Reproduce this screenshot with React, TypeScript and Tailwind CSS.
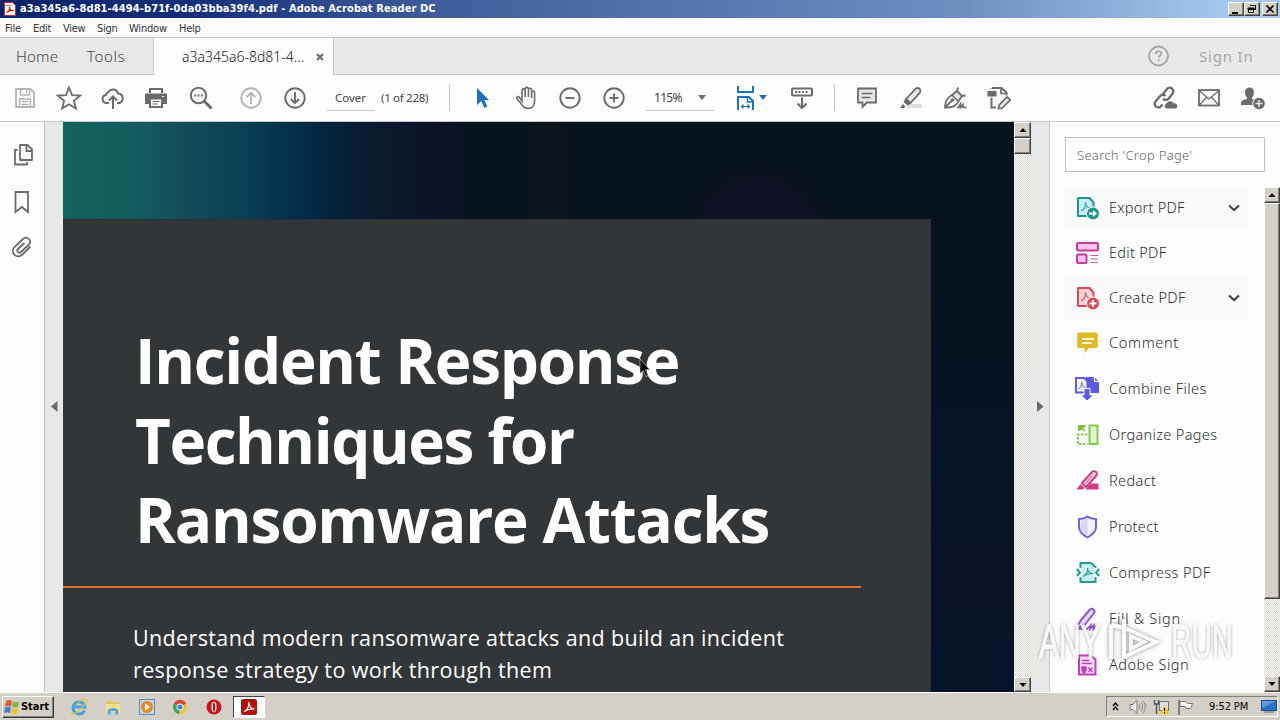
import React, { ReactNode } from "react";

const G = "#6b6b6b";

function Svg({ w, h, vb, children, className = "" }: { w: number; h: number; vb?: string; children: ReactNode; className?: string }) {
  return (
    <svg width={w} height={h} viewBox={vb ?? `0 0 ${w} ${h}`} fill="none" className={`block shrink-0 ${className}`}>
      {children}
    </svg>
  );
}

function Tool({ children }: { children: ReactNode }) {
  return <div className="flex h-full w-11 shrink-0 items-center justify-center">{children}</div>;
}

function WinButton({ children, className = "" }: { children?: ReactNode; className?: string }) {
  return (
    <div className={`flex items-center justify-center border border-t-white border-l-white border-r-[#404040] border-b-[#404040] bg-[#d4d0c8] shadow-[inset_-1px_-1px_0_#808080] ${className}`}>
      {children}
    </div>
  );
}

function Arrow({ down = false }: { down?: boolean }) {
  return (
    <Svg w={8} h={4}>
      <path d={down ? "M0.5 0h7L4 4z" : "M0.5 4h7L4 0z"} fill="#000" />
    </Svg>
  );
}

const track = "bg-[repeating-conic-gradient(#ffffff_0_25%,#d8d4cc_0_50%)] bg-[length:2px_2px]";

const PdfMark = ({ c }: { c: string }) => (
  <path d="M5 15c3-1.500 5-4.500 4.500-8.500.5 4 2.500 6 5.500 5.500" stroke={c} strokeWidth="1.200" strokeLinejoin="round" />
);

const icons: Record<string, ReactNode> = {
  export: (
    <Svg w={24} h={24}>
      <path d="M2 2h11.500l4 4.500V20H2z" fill="#c5eef0" stroke="#219492" strokeWidth="2" strokeLinejoin="round" />
      <PdfMark c="#3aa3b3" />
      <circle cx="17" cy="17.500" r="6.900" fill="#fdfdfd" />
      <circle cx="17" cy="17.500" r="6" fill="#1e9690" />
      <path d="M13 17.500h5" stroke="#fff" strokeWidth="2.200" />
      <path d="M17 14l4 3.500-4 3.500z" fill="#fff" />
    </Svg>
  ),
  edit: (
    <Svg w={24} h={24}>
      <rect x="1" y="2" width="21" height="7.500" rx="1" fill="#fcc4ee" stroke="#c83a93" strokeWidth="2" />
      <rect x="1" y="13.500" width="9.500" height="8.500" rx="1" fill="#fcc4ee" stroke="#c83a93" strokeWidth="2" />
      <path d="M14.500 14.500H22M14.500 18H22M14.500 21.500H22" stroke="#c0609c" strokeWidth="1.200" />
    </Svg>
  ),
  create: (
    <Svg w={24} h={24}>
      <path d="M2 2h11.500l4 4.500V20H2z" fill="#fbd4d8" stroke="#d9475a" strokeWidth="2" strokeLinejoin="round" />
      <PdfMark c="#b66270" />
      <circle cx="17" cy="17.500" r="6.900" fill="#fdfdfd" />
      <circle cx="17" cy="17.500" r="6" fill="#d9475a" />
      <path d="M13.500 17.500h7M17 14v7" stroke="#fff" strokeWidth="2" />
    </Svg>
  ),
  comment: (
    <Svg w={24} h={24}>
      <path d="M3 1.500h17a1.800 1.800 0 0 1 1.800 1.800v12a1.800 1.800 0 0 1-1.800 1.800H13L8.500 22v-4.900H3a1.800 1.800 0 0 1-1.800-1.800v-12a1.800 1.800 0 0 1 1.800-1.800z" fill="#e0ba26" />
      <path d="M6 8h12M6 12h9.500" stroke="#fff8d8" strokeWidth="1.900" />
    </Svg>
  ),
  combine: (
    <Svg w={24} h={24} className="-ml-[1px] mr-[1px]">
      <path d="M11 0h8.500l4.500 5v11H11z" fill="#5f5be0" />
      <path d="M19.500 0v4.500H24" stroke="#fdfdfd" strokeWidth="1.200" />
      <path d="M1 1h8.500l3 3.500V15.500H1z" fill="#f4f3ff" stroke="#5f5be0" strokeWidth="2" />
      <path d="M3.500 12c2-1 3.500-3.500 3.200-6.500C7 9 8.500 10.500 10.500 10" stroke="#5f5be0" strokeWidth="1" />
      <path d="M9 11.500h6V18h3.800L12 24 5.500 18H9z" fill="#5f5be0" stroke="#fdfdfd" strokeWidth="1" />
    </Svg>
  ),
  organize: (
    <Svg w={24} h={24}>
      <rect x="13.500" y="2.500" width="8" height="18.500" fill="#dff5cf" stroke="#88c94c" strokeWidth="2" />
      <path d="M2 8.500V2h1.500l5.500 0L2 8.500" fill="#7fc241" />
      <path d="M3 7.500L9.500 2.500M3 3l6 5" stroke="#7fc241" strokeWidth="1.600" />
      <path d="M11.500 11.500H2v9.500h9.500" stroke="#88c94c" strokeWidth="2" strokeDasharray="2.500 1.500" />
    </Svg>
  ),
  redact: (
    <Svg w={24} h={24}>
      <path d="M9.500 20.500l5-6h7q1 0 1 1v5z" fill="#d93a85" />
      <path d="M.5 20.500l4-5.500 4 4-2 1.500z" fill="#d93a85" />
      <path d="M6 14L16 3a2.800 2.800 0 0 1 4 4L10 18z" fill="#fbd0e6" stroke="#c93d84" strokeWidth="2" />
      <path d="M9.500 14.500l6.500-7.500" stroke="#c93d84" strokeWidth="1" />
    </Svg>
  ),
  protect: (
    <Svg w={24} h={24}>
      <path d="M11.500 1.500C9 3.500 6 4 3 4v8c0 5 4 8 8.500 10.500C16 20 20 17 20 12V4c-3 0-6-.5-8.500-2.500z" fill="#f1f0fd" stroke="#7468d0" strokeWidth="2" />
      <path d="M11.500 4C9.500 5 7 5.500 5 5.500V12c0 3.500 3 6.500 6.500 8z" fill="#d9d6f8" />
    </Svg>
  ),
  compress: (
    <Svg w={24} h={24}>
      <path d="M4.500 7V2h10.500l4.500 4v1M4.500 16v5h15v-5" fill="#c9eeee" stroke="#299795" strokeWidth="2" />
      <path d="M5.500 6h13v11h-13z" fill="#c9eeee" />
      <path d="M7 15.500c3-1.500 5-5 4.500-8.500.5 4 2.500 6 5.500 5.500-3.500-.3-7 .8-10 3z" stroke="#299795" strokeWidth="1.100" />
      <path d="M0.800 8l3.200 3.500L.8 15M23.200 8L20 11.500l3.200 3.500" stroke="#299795" strokeWidth="2" />
    </Svg>
  ),
  fill: (
    <Svg w={24} h={24} className="-ml-[1px] mr-[1px]">
      <path d="M1 22l5-9L15 2.500a2.700 2.700 0 0 1 4 3.500L10 17.500z" fill="#e8dafb" stroke="#8a5acb" strokeWidth="2" strokeLinejoin="round" />
      <path d="M1 22h11l4-4-1 4 4-4-.5 4 3.500-3v3" stroke="#8a4fc4" strokeWidth="1.700" />
    </Svg>
  ),
  adobesign: (
    <Svg w={24} h={24}>
      <path d="M3 2.500h11.500l5 4v15H3z" fill="#fbdcf8" stroke="#bd3fc0" strokeWidth="2" />
      <path d="M6 7.500h7M6 10.500h10" stroke="#bd3fc0" strokeWidth="1.300" />
      <path d="M6 14h4v3.500h-1V20H7v-2.500H6zM12.500 14.500l4 4.500M16.500 14.500l-4 4.500" fill="#bd3fc0" stroke="#bd3fc0" strokeWidth="1.300" />
    </Svg>
  ),
};

const tools = [
  { label: "Export PDF", icon: "export", box: "h-[45px]", open: true, ls: "tracking-[0.25px]" },
  { label: "Edit PDF", icon: "edit", box: "h-[45px]", ls: "tracking-[0.3px]" },
  { label: "Create PDF", icon: "create", box: "h-[45px]", open: true, ls: "tracking-[0.35px]" },
  { label: "Comment", icon: "comment", box: "h-[46px]", ls: "tracking-[0.7px]" },
  { label: "Combine Files", icon: "combine", box: "h-[46px]", ls: "tracking-[0.45px]" },
  { label: "Organize Pages", icon: "organize", box: "h-[46px]", ls: "tracking-[0.35px]" },
  { label: "Redact", icon: "redact", box: "h-[46px]", ls: "tracking-[0.4px]" },
  { label: "Protect", icon: "protect", box: "h-[46px]", ls: "tracking-[0.35px]" },
  { label: "Compress PDF", icon: "compress", box: "h-[46px]", ls: "tracking-[0.45px]" },
  { label: "Fill & Sign", icon: "fill", box: "h-[46px]", ls: "tracking-[0.7px]" },
  { label: "Adobe Sign", icon: "adobesign", box: "h-[46px]", ls: "tracking-[0.5px]" },
];

function TitleBar() {
  return (
    <div className="flex h-[18px] shrink-0 items-center bg-[linear-gradient(90deg,#0a246a_0%,#15307a_15%,#3f5f9c_35%,#6c8fc0_75%,#a6caf0_97%)] pr-[2px] pl-1">
      <Svg w={12} h={14}>
        <path d="M0.500.500h8l3 3v10h-11z" fill="#fff" stroke="#c9302a" />
        <path d="M1 3h7v1H1z" fill="#e87b70" />
        <path d="M2.500 10.500c2-1 3.500-3 3-5.500 0 2.500 2 4.200 4 3.500-2-.2-5 .5-7 2z" stroke="#d3211b" strokeWidth="1.300" />
      </Svg>
      <div className="ml-1 flex-1 text-[11px] leading-[18px] font-bold tracking-[0.1px] whitespace-nowrap text-white [font-family:'DejaVu_Sans_Condensed','DejaVu_Sans',sans-serif]">
        a3a345a6-8d81-4494-b71f-0da03bba39f4.pdf - Adobe Acrobat Reader DC
      </div>
      <WinButton className="h-[14px] w-4">
        <Svg w={10} h={10}><path d="M1 8h6v2H1z" fill="#000" /></Svg>
      </WinButton>
      <WinButton className="h-[14px] w-4">
        <Svg w={10} h={10}><path d="M3.500 1.500h5v4h-2M3 1.500h6M1.500 4.500h5v4h-5zM1 4h6v1.500H1z" stroke="#000" /></Svg>
      </WinButton>
      <WinButton className="ml-[2px] h-[14px] w-4">
        <Svg w={10} h={10}><path d="M1.500 1.500l7 7M8.500 1.500l-7 7" stroke="#000" strokeWidth="1.600" /></Svg>
      </WinButton>
    </div>
  );
}

function MenuBar() {
  return (
    <div className="flex h-[19px] shrink-0 items-center bg-[#fdfbfa] pt-[2px] pl-[5px] text-[11px] leading-[17px] text-[#333] [font-family:'DejaVu_Sans_Condensed','DejaVu_Sans',sans-serif]">
      <span className="w-7 tracking-[-0.1px]">File</span>
      <span className="w-[30px] tracking-[-0.3px]">Edit</span>
      <span className="w-[34px] tracking-[-0.3px]">View</span>
      <span className="w-8 tracking-[-0.3px]">Sign</span>
      <span className="w-[50px] tracking-[-0.2px]">Window</span>
      <span className="tracking-[-0.3px]">Help</span>
    </div>
  );
}

function TabBar() {
  return (
    <div className="flex h-[38px] shrink-0 border-t border-[#c6c6c6] text-[#444] [font-family:'Noto_Sans',sans-serif]">
      <div className="flex w-[154px] items-center border-r border-b border-[#c6c6c6] bg-[#e9e9e9] pl-4 text-[15px] font-light">
        <span className="w-[71px] tracking-[0.2px]">Home</span>
        <span className="tracking-[0.6px]">Tools</span>
      </div>
      <div className="flex w-[179px] items-center bg-[#fdfdfd] pl-7">
        <span className="w-[134px] text-[14px] font-light text-[#222]">a3a345a6-8d81-4...</span>
        <Svg w={8} h={8}><path d="M1 1l6 6M7 1L1 7" stroke="#666" strokeWidth="2" /></Svg>
      </div>
      <div className="flex flex-1 items-center border-b border-l border-[#c6c6c6] bg-[#e9e9e9]">
        <Svg w={22} h={22} className="ml-[813px]">
          <circle cx="11.500" cy="11" r="9.500" stroke="#a5a5a5" strokeWidth="1.800" />
          <path d="M8.700 9c0-3.700 5.600-3.500 5.600-.3 0 2-2.600 2.100-2.600 4M11.700 14.200v2" stroke="#a5a5a5" strokeWidth="1.700" />
        </Svg>
        <span className="ml-[30px] text-[15px] tracking-[0.8px] text-[#a8a8a8]">Sign In</span>
      </div>
    </div>
  );
}

function Toolbar() {
  return (
    <div className="flex h-[47px] shrink-0 items-center border-b border-[#c8c8c8] bg-[#fdfdfd] pb-px pl-[3px] text-[#444] [font-family:'Noto_Sans',sans-serif]">
      <Tool>
        <Svg w={22} h={22}>
          <path d="M2 2h14.500L20 5.500V20H2z" stroke="#b4b4b4" strokeWidth="1.800" />
          <path d="M6.500 2v6h9V2M5.500 20v-8h11v8M12.500 3.500v3M7.500 14.500h7M7.500 17.500h7" stroke="#b4b4b4" strokeWidth="1.500" />
        </Svg>
      </Tool>
      <Tool>
        <Svg w={26} h={26}>
          <path d="M13 2.500l3 7.600 8.200.5-6.300 5.200 2 7.700L13 19.200l-6.900 4.300 2-7.700L1.800 10.600l8.200-.5z" stroke={G} strokeWidth="1.800" />
        </Svg>
      </Tool>
      <Tool>
        <Svg w={24} h={24}>
          <path d="M8 17H5.500a4 4 0 0 1-.8-7.900A4 4 0 0 1 7.500 6 5.200 5.200 0 0 1 17 7.500a4.900 4.900 0 0 1 1.500 9.500H16" stroke={G} strokeWidth="2" />
          <path d="M12 23V11M8 14.500l4-4 4 4" stroke={G} strokeWidth="2" />
        </Svg>
      </Tool>
      <Tool>
        <Svg w={24} h={24} className="-translate-x-px">
          <path d="M5 2h14v5H5z" fill={G} />
          <path d="M7 4h10v3H7z" fill="#fdfdfd" />
          <path d="M2 7.500h20q1 0 1 1V18h-4v4H5v-4H1V8.500q0-1 1-1z" fill={G} />
          <path d="M7 13.500h10V20H7z" fill="#fdfdfd" />
          <path d="M8.500 15.500h7M8.500 18h5" stroke={G} strokeWidth="1.200" />
          <path d="M18 10.500h2" stroke="#fff" strokeWidth="1.200" />
        </Svg>
      </Tool>
      <Tool>
        <Svg w={24} h={24}>
          <circle cx="9.500" cy="9.500" r="7.700" stroke={G} strokeWidth="2" />
          <path d="M15 15l7.500 7.500" stroke={G} strokeWidth="3" />
          <path d="M5.300 9.500h8.500" stroke={G} strokeWidth="1.900" strokeDasharray="1.900 1.400" />
        </Svg>
      </Tool>
      <div className="w-[6px] shrink-0" />
      <Tool>
        <Svg w={22} h={22}>
          <circle cx="11" cy="11" r="9.700" stroke="#b4b4b4" strokeWidth="1.900" />
          <path d="M11 17V6M6.800 10L11 5.800l4.200 4.200" stroke="#b4b4b4" strokeWidth="1.900" />
        </Svg>
      </Tool>
      <Tool>
        <Svg w={22} h={22}>
          <circle cx="11" cy="11" r="9.700" stroke={G} strokeWidth="1.900" />
          <path d="M11 5v11M6.800 12l4.200 4.200 4.200-4.200" stroke={G} strokeWidth="1.900" />
        </Svg>
      </Tool>
      <div className="ml-[10px] h-[27px] w-12 shrink-0 border-b border-[#c4c4c4] pl-2 text-[11.500px] leading-[27px]">Cover</div>
      <span className="ml-[6px] w-[68px] shrink-0 text-[11.500px] tracking-[-0.300px] whitespace-nowrap">(1 of 228)</span>
      <div className="mr-[10px] h-[27px] w-px shrink-0 bg-[#c4c4c4]" />
      <Tool>
        <Svg w={14} h={22} className="translate-x-[1px]">
          <path d="M1 1v17l4.300-4 3 7 3-1.400-3-6.600H13z" fill="#1f6fc0" />
        </Svg>
      </Tool>
      <Tool>
        <Svg w={24} h={24}>
          <path d="M7.500 13V4.500a1.600 1.600 0 0 1 3.200 0V11 3a1.600 1.600 0 0 1 3.200 0v8V3.800a1.600 1.600 0 0 1 3.200 0V12 6.500a1.500 1.500 0 0 1 3 0V15c0 4.500-2.500 7.500-6.600 7.500-4.500 0-6-3-7.500-5.800L2.300 12.500c-.8-1.500 1.500-2.600 2.700-1L7.500 15z" stroke={G} strokeWidth="1.600" className="[transform:translateX(0.500px)]" />
        </Svg>
      </Tool>
      <Tool>
        <Svg w={22} h={22}>
          <circle cx="11" cy="11" r="9.700" stroke={G} strokeWidth="1.900" />
          <path d="M6.500 11h9" stroke={G} strokeWidth="1.900" />
        </Svg>
      </Tool>
      <Tool>
        <Svg w={22} h={22}>
          <circle cx="11" cy="11" r="9.700" stroke={G} strokeWidth="1.900" />
          <path d="M6.500 11h9M11 6.500v9" stroke={G} strokeWidth="1.900" />
        </Svg>
      </Tool>
      <div className="ml-[10px] flex h-[27px] w-[68px] shrink-0 items-center border-b border-[#c4c4c4] pl-2">
        <span className="w-[44px] pt-px text-[12px] tracking-[-0.7px]">115%</span>
        <Svg w={8} h={5}><path d="M0 0h8L4 5z" fill={G} /></Svg>
      </div>
      <div className="ml-[10px] flex w-11 shrink-0 items-center pl-3">
        <Svg w={20} h={26}>
          <path d="M2 1v6h15V1M17 25v-9l-4-4H2v13" stroke="#1f6fc0" strokeWidth="2" />
          <path d="M11.500 12v5H17" stroke="#1f6fc0" strokeWidth="1.500" />
          <path d="M5.500 21.500h8M7.500 19.500l-2 2 2 2M11.500 19.500l2 2-2 2" stroke="#1f6fc0" strokeWidth="1.200" />
        </Svg>
        <Svg w={8} h={5} className="ml-[3px]"><path d="M0 0h8L4 5z" fill="#1f6fc0" /></Svg>
      </div>
      <div className="ml-3">
        <Tool>
          <Svg w={24} h={24}>
            <rect x="2" y="2.500" width="20" height="7" rx="1" stroke={G} strokeWidth="2" />
            <path d="M5 6h14" stroke={G} strokeWidth="2" strokeDasharray="2 1.500" />
            <path d="M12 11.500V22M7.500 17.500L12 22l4.500-4.500" stroke={G} strokeWidth="2" />
          </Svg>
        </Tool>
      </div>
      <div className="mr-[10px] ml-[10px] h-[27px] w-px shrink-0 bg-[#c4c4c4]" />
      <Tool>
        <Svg w={22} h={22}>
          <path d="M2 1.500h18v14h-9L6.500 20v-4.500H2z" fill="#e6e6e6" stroke={G} strokeWidth="1.800" />
          <path d="M5.500 6.500h11M5.500 10.500h9" stroke={G} strokeWidth="1.500" />
        </Svg>
      </Tool>
      <Tool>
        <Svg w={24} h={24}>
          <path d="M8 18h15v4H8z" fill="#dedede" />
          <path d="M7 13L17 2.500q1.500-1 3.500 0 1.500 1.500.5 4L11.500 17z" fill="#e6e6e6" stroke={G} strokeWidth="1.800" />
          <path d="M6.500 12.500l5.500 5-3.500 2-4-3.500zM4 18l2.500 2.500L5 22H1z" fill={G} />
        </Svg>
      </Tool>
      <Tool>
        <Svg w={24} h={24}>
          <path d="M2 21.500C2 15 4 11.500 9 9l6.500 6C14 19 9.500 22 2 21.500zM2 21.500l7-7" stroke={G} strokeWidth="1.800" />
          <path d="M9.500 8.500L14 2.500l1 5 6 1.500-5 6z" fill="#e6e6e6" />
          <path d="M15 1.500l-1 3.500 5 5 3.500-.5M9 9l5-4M15.500 15l3.500-5" stroke={G} strokeWidth="1.800" />
          <circle cx="9.500" cy="14" r="1.800" fill={G} />
          <path d="M14 21.500h1.500l2-3.500v3.500l2.500-3v3H23.500" stroke={G} strokeWidth="1.700" />
        </Svg>
      </Tool>
      <Tool>
        <Svg w={24} h={24}>
          <path d="M5 2h9.500l5 4.500v3M4.500 11.500V21.500H9" stroke={G} strokeWidth="2" />
          <path d="M14 2v5.500h5" stroke={G} strokeWidth="1.700" />
          <path d="M0.500 5h9v5.500h-9zM2.500 4q0-2 3-2" fill={G} />
          <path d="M11.500 22.500l.7-3.700L20 11l3.200 3-8 8z" fill="#e6e6e6" stroke={G} strokeWidth="1.700" />
        </Svg>
      </Tool>
      <div className="w-[122px] shrink-0" />
      <Tool>
        <Svg w={26} h={24}>
          <path d="M10.500 8.500l4.500-5.500a3.600 3.600 0 0 1 5.500 4.700l-4 5a3.800 3.800 0 0 1-5.500 0" stroke={G} strokeWidth="2.300" />
          <path d="M13.500 10a3.800 3.800 0 0 0-5.500.3l-4.500 5.200a3.600 3.600 0 0 0 5.500 4.700l1.500-1.700" stroke={G} strokeWidth="2.300" />
          <path d="M14 22.500a2.800 2.800 0 0 1 .5-5 4 4 0 0 1 7.300 0 2.600 2.600 0 0 1 1.700 5z" fill={G} />
        </Svg>
      </Tool>
      <Tool>
        <Svg w={22} h={18}>
          <rect x="1" y="1" width="20" height="15.500" stroke={G} strokeWidth="1.800" />
          <path d="M1.500 2L11 10l9.500-8M1.500 16l7-8M20.500 16l-7-8" stroke={G} strokeWidth="1.200" />
        </Svg>
      </Tool>
      <Tool>
        <Svg w={26} h={24}>
          <path d="M9.500 1.500c5.500 0 5.500 7 2.500 10v1.500c2 .3 3.500 1.200 3.500 1.200L13.500 19H1v-2c0-2.500 3-3.500 6-4v-1.500c-3-3-3-10 2.500-10z" fill={G} />
          <circle cx="19" cy="17.500" r="6.800" fill="#fdfdfd" />
          <circle cx="19" cy="17.500" r="5.800" fill={G} />
          <path d="M15.500 17.500h7M19 14v7" stroke="#e5e5e5" strokeWidth="1.500" />
        </Svg>
      </Tool>
    </div>
  );
}

function Document() {
  return (
    <div className="relative flex min-w-0 flex-1 flex-col overflow-hidden bg-[#07131f] bg-[linear-gradient(90deg,#13635f_0px,#135d5e_70px,#124d5b_120px,#093e54_185px,#022d49_235px,#02243f_265px,#0a1c31_300px,#0b1429_365px,#0c1228_385px,#07131f_410px,#07131f_455px,#0b1519_485px,#07131f_520px,#07131f_951px)]">
      <div className="absolute inset-y-0 right-0 w-[84px] bg-[linear-gradient(180deg,#07131f_0%,#07131f_30%,#061427_60%,#0b1226_82%,#05142b_94%)]" />
      <div className="absolute top-[38px] left-[620px] h-[60px] w-[150px] bg-[radial-gradient(ellipse_at_bottom,#0e1123_45%,transparent_70%)]" />
      <div className="relative mt-[97px] w-[868px] flex-1 border-t border-r border-[#2a3036] bg-[#333639] text-white [font-family:'Open_Sans',sans-serif]">
        <h1 className="pt-[101px] pl-[72px] text-[62px] leading-[79.500px] font-bold tracking-[-1.280px] whitespace-nowrap">
          Incident Response
          <br />
          <span className="tracking-[-1.450px]">Techniques for</span>
          <br />
          <span className="tracking-[-1.200px]">Ransomware Attacks</span>
        </h1>
        <div className="mt-[26px] h-[2px] w-[798px] bg-[#d8702c]" />
        <p className="mt-[34px] pl-[70px] text-[21.500px] leading-[32px] tracking-[0.37px] whitespace-nowrap">
          Understand modern ransomware attacks and build an incident
          <br />
          response strategy to work through them
        </p>
      </div>
      <Svg w={13} h={20} className="absolute top-[236px] left-[576px]">
        <path d="M1 1v14.500l3.300-3 2.500 6 2.200-1-2.500-5.700H11z" fill="#000" stroke="#ddd" strokeWidth="0.600" />
      </Svg>
    </div>
  );
}

function ToolsPanel() {
  return (
    <div className="flex w-[230px] shrink-0 flex-col [font-family:'Noto_Sans',sans-serif]">
      <div className="mt-[15px] ml-[15px] flex h-[35px] w-[200px] shrink-0 items-center border border-[#bdbdbd] bg-white pt-[2px] pl-[11px] text-[13px] font-light tracking-[0.3px] text-[#666]">
        Search 'Crop Page'
      </div>
      <div className="mt-[15px] flex min-h-0 flex-1">
        <div className="flex w-[214px] flex-col overflow-hidden pl-[14px]">
          <div className="-mt-[2px]">
            {tools.map((t) => (
              <div key={t.label} className={`flex w-[184px] items-center pl-3 ${t.box} ${t.open ? "bg-[#fafafa]" : ""}`}>
                {icons[t.icon]}
                <span className={`ml-[9px] flex-1 text-[14.500px] font-light whitespace-nowrap text-[#2c2c2c] ${t.ls}`}>{t.label}</span>
                {t.open && (
                  <Svg w={12} h={8} className="mr-2"><path d="M1 1.500l5 4.500 5-4.500" stroke="#444" strokeWidth="2.200" /></Svg>
                )}
              </div>
            ))}
          </div>
        </div>
        <div className={`flex w-4 flex-col ${track}`}>
          <WinButton className="h-4 w-full shrink-0"><Arrow /></WinButton>
          <WinButton className="h-[396px] w-full shrink-0" />
          <WinButton className="mt-auto h-4 w-full shrink-0"><Arrow down /></WinButton>
        </div>
      </div>
    </div>
  );
}

function Watermark() {
  return (
    <div className="absolute top-[616px] left-[1039px] flex h-[50px] items-center text-[49px] leading-[50px] text-white/90 [font-family:'Liberation_Sans',sans-serif] [text-shadow:0_0_4px_#0008]">
      <span className="w-[66px] origin-left scale-x-[0.61] [-webkit-text-stroke:1.5px_#ffffffcc]">ANY</span>
      <Svg w={62} h={50} className="[filter:drop-shadow(0_0_2px_#0007)]">
        <path d="M6 9v34M19 12v31M19 3v9l32 14-32 15M19 12L6 9M26 20l13 6-13 7z" stroke="#ffffffee" strokeWidth="4" />
      </Svg>
      <span className="ml-[4px] w-[66px] origin-left scale-x-[0.58] [-webkit-text-stroke:1.5px_#ffffffcc]">RUN</span>
    </div>
  );
}

function Taskbar() {
  return (
    <div className="flex h-7 shrink-0 items-center border-t border-white bg-[#d4d0c8] pl-[2px] [font-family:'DejaVu_Sans_Condensed','DejaVu_Sans',sans-serif]">
      <WinButton className="h-[22px] w-[52px]">
        <Svg w={16} h={16} className="-ml-[3px]">
          <path d="M2 2.500Q5 0 8 2L7 7.500Q4 6 1 7.500z" fill="#e2582c" />
          <path d="M9 2.500Q12 4 15 2.500L14 8Q11 9 8 7.500z" fill="#79b743" />
          <path d="M1 8.500Q4 7 7 8.500L6 14Q3 12.500 0 14z" fill="#3f7fd6" />
          <path d="M8 9Q11 10.500 14 9L13 14.500Q10 15.500 7 14z" fill="#f3c22b" />
        </Svg>
        <span className="ml-px pt-px text-[11px] font-bold tracking-[0px] text-black">Start</span>
      </WinButton>
      <div className="ml-[8px] flex w-[171px] items-center pt-px">
        <div className="flex w-[34px] justify-center">
          <Svg w={18} h={18}>
            <path d="M14.500 12.500A6 6 0 1 1 15 9H5" stroke="#45a0dc" strokeWidth="3" />
            <path d="M2 15C0 17 5 16 10 11.500S18 2 15.500 1.500 9 4 6 7" stroke="#e9bd3a" strokeWidth="1.200" />
          </Svg>
        </div>
        <div className="flex w-[34px] justify-center">
          <Svg w={16} h={16}>
            <path d="M1 2h5l1 1.500h8V13H1z" fill="#e3c55c" />
            <path d="M1 5h14v8H1z" fill="#f2df90" />
            <path d="M3 15.500v-5q5-3 10 0v5h-2.500V12h-5v3.500z" fill="#4ba6d8" />
          </Svg>
        </div>
        <div className="flex w-[33px] justify-center">
          <Svg w={16} h={16}>
            <rect x="0.500" y="0.500" width="15" height="15" fill="#b9d7ee" stroke="#5a8fc0" />
            <circle cx="8" cy="8" r="6" fill="#f08519" />
            <path d="M6 4.500L11.500 8 6 11.500z" fill="#fff" />
          </Svg>
        </div>
        <div className="flex w-[34px] justify-center">
          <Svg w={16} h={16}>
            <circle cx="8" cy="8" r="7" fill="#e8c52e" />
            <path d="M8 8L1.900 4.500A7 7 0 0 1 14.200 4.500z" fill="#dc4437" />
            <path d="M8 8L1.900 4.500A7 7 0 0 0 7 15z" fill="#3fa35a" />
            <circle cx="8" cy="8" r="3.500" fill="#fff" />
            <circle cx="8" cy="8" r="2.600" fill="#4285e0" />
          </Svg>
        </div>
        <div className="flex w-[34px] justify-center">
          <Svg w={16} h={16}>
            <circle cx="8" cy="8" r="7.500" fill="#c5171c" />
            <ellipse cx="8" cy="8" rx="2.600" ry="5.200" fill="#f4dede" />
            <ellipse cx="8" cy="8" rx="1" ry="4.500" fill="#8c1115" />
          </Svg>
        </div>
      </div>
      <div className="flex h-[22px] w-8 items-center justify-center border border-t-[#404040] border-r-white border-b-white border-l-[#404040] bg-white">
        <Svg w={16} h={16}>
          <rect width="16" height="16" rx="2.500" fill="#b1120e" />
          <path d="M3 12.500c3-1 5.500-5 4.700-9.500C8 7.500 10.500 10.500 13.500 10 10 9.500 6 10.500 3 12.500z" stroke="#fff" strokeWidth="1.200" />
        </Svg>
      </div>
      <div className="mr-[2px] ml-auto flex h-[21px] w-[172px] items-center border border-t-[#808080] border-r-white border-b-white border-l-[#808080]">
        <Svg w={7} h={9} className="ml-[5px]"><path d="M1 4l2.500-3L6 4M1 8l2.500-3L6 8" stroke="#000" strokeWidth="1.300" /></Svg>
        <Svg w={17} h={16} className="ml-[10px]">
          <path d="M1 5.500h3L8 1.500v13l-4-4H1z" fill="#f5f5f5" stroke="#777" />
          <path d="M10 5.500q2 2.500 0 5M12 3.500q3.500 4.500 0 9M14 2q5 6 0 12" stroke="#888" />
        </Svg>
        <Svg w={17} h={16} className="ml-[7px]">
          <rect x="6.500" y="2.500" width="9" height="9" fill="#d9dfe6" stroke="#6d747c" />
          <path d="M1.500 1v4h4V1M3.500 5v10" stroke="#555" strokeWidth="1.500" />
          <path d="M11.500 6l5 9h-10z" fill="#f6c821" />
          <path d="M11.500 9v3M11.500 13v1.200" stroke="#000" />
        </Svg>
        <Svg w={17} h={16} className="ml-[7px]">
          <path d="M2 1v15" stroke="#666" strokeWidth="1.500" />
          <path d="M3 2.500h6l1.500 2h5l-2 5H9l-1-2H3z" fill="#fafafa" stroke="#777" />
        </Svg>
        <span className="ml-[15px] w-[52px] pt-px text-[11px] tracking-[-0.1px] whitespace-nowrap text-black">9:52 PM</span>
        <Svg w={16} h={13}>
          <rect x="0.500" y="0.500" width="15" height="10" fill="#2b6fc0" stroke="#1e4a86" />
          <path d="M1 1h14L1 8z" fill="#5c9fe0" />
          <path d="M3 12h10" stroke="#5b6f86" />
        </Svg>
      </div>
    </div>
  );
}

export default function App() {
  return (
    <div className="relative flex h-[720px] w-[1280px] flex-col overflow-hidden bg-[#fdfdfd]">
      <TitleBar />
      <MenuBar />
      <TabBar />
      <Toolbar />
      <div className="flex min-h-0 flex-1">
        <div className="flex w-[45px] shrink-0 flex-col border-r border-[#c4c4c4] bg-[#fdfdfd]">
          <Svg w={22} h={24} className="mt-[21px] ml-[13px]">
            <path d="M7 2h7.500l4.500 4.500V17H7z" stroke={G} strokeWidth="1.800" strokeLinejoin="round" />
            <path d="M13.500 2.500V8H19M4.500 7H2v14.500h12V19" stroke={G} strokeWidth="1.800" />
          </Svg>
          <Svg w={18} h={24} className="mt-[23px] ml-[13px]">
            <path d="M2.500 2h12.500v20l-6.200-5-6.300 5z" stroke={G} strokeWidth="1.800" />
          </Svg>
          <Svg w={22} h={22} className="mt-[22px] ml-[11px]">
            <path d="M19.500 10.500l-8 8c-5.500 5-13-1.500-8-7.500l8.500-8c4-3.500 9.500 1.500 6 5.500l-8 7.500c-2.500 2-5-1-3-3L13.500 7" stroke={G} strokeWidth="1.800" />
          </Svg>
        </div>
        <div className="flex w-[18px] shrink-0 items-center justify-center bg-[#e8e8e8]">
          <Svg w={7} h={12}><path d="M6.500 0v11L0 5.500z" fill={G} /></Svg>
        </div>
        <Document />
        <div className={`flex w-[17px] shrink-0 flex-col ${track}`}>
          <WinButton className="h-4 w-full shrink-0"><Arrow /></WinButton>
          <WinButton className="h-4 w-full shrink-0" />
          <WinButton className="mt-auto h-[15px] w-full shrink-0"><Arrow down /></WinButton>
        </div>
        <div className="flex w-[19px] shrink-0 items-center justify-center border-r border-[#c4c4c4] bg-[#e8e8e8]">
          <Svg w={7} h={12}><path d="M0 0v11L6.500 5.500z" fill={G} /></Svg>
        </div>
        <ToolsPanel />
      </div>
      <Taskbar />
      <Watermark />
    </div>
  );
}
